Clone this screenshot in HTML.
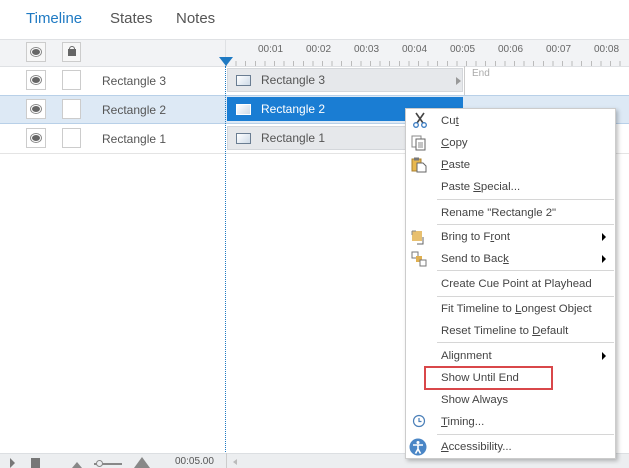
<!DOCTYPE html>
<html><head><style>
*{margin:0;padding:0;box-sizing:border-box}
body{width:629px;height:468px;overflow:hidden;background:#fff;font-family:"Liberation Sans",sans-serif;font-size:12px;color:#444;position:relative}
.a{position:absolute}
.tab{position:absolute;top:10px;font-size:15px;color:#555}
.eye{position:absolute;left:26px;width:20px;height:20px;border:1px solid #ccc;background:#fff}
.eye:after{content:"";position:absolute;left:5px;top:6px;width:8px;height:6px;border-radius:50%;background:#666;box-shadow:0 0 0 1px #fff, 0 0 0 2px #888}
.chk{position:absolute;left:62px;width:19px;height:20px;border:1px solid #ccc;background:#fff}
.nm{position:absolute;left:102px;font-size:12px;color:#555}
.bar{position:absolute;left:227px;width:236px;height:24px;background:#e6e8eb;border:1px solid #d4d7db}
.bar .ic{position:absolute;left:8px;top:6px;width:15px;height:11px;border:1px solid #6a7d92;background:linear-gradient(135deg,#fff,#cfdbe8)}
.bar span{position:absolute;left:33px;top:4px;font-size:12px;color:#555}
.tk{position:absolute;font-size:10px;color:#666;top:44px}
.mi{position:absolute;left:441px;font-size:11.4px;color:#444}
.sep{position:absolute;left:437px;width:177px;height:1px;background:#d6d6d6}
.arr{position:absolute;left:602px;width:0;height:0;border-left:4px solid #000;border-top:4px solid transparent;border-bottom:4px solid transparent}
u{text-decoration:underline}
</style></head><body>
<div class="tab" style="left:26px;color:#1f7ac3">Timeline</div>
<div class="tab" style="left:110px">States</div>
<div class="tab" style="left:176px">Notes</div>
<div class="a" style="left:0;top:39px;width:629px;height:28px;background:#f2f3f5;border-top:1px solid #dfe1e4;border-bottom:1px solid #dfe1e4"></div>
<div class="eye" style="top:42px;background:#f7f7f7"></div>
<div class="chk" style="top:42px;background:#f7f7f7"><div class="a" style="left:5px;top:6px;width:8px;height:7px;background:#666"></div><div class="a" style="left:6px;top:3px;width:6px;height:5px;border:1.5px solid #666;border-bottom:none;border-radius:3px 3px 0 0"></div></div>
<div class="a" style="left:225px;top:39px;width:1px;height:28px;background:#dfe1e4"></div>
<div class="tk" style="left:258px">00:01</div><div class="tk" style="left:306px">00:02</div><div class="tk" style="left:354px">00:03</div><div class="tk" style="left:402px">00:04</div><div class="tk" style="left:450px">00:05</div><div class="tk" style="left:498px">00:06</div><div class="tk" style="left:546px">00:07</div><div class="tk" style="left:594px">00:08</div>
<div class="a" style="left:226px;top:61px;width:403px;height:5px;background:repeating-linear-gradient(90deg,#bbb 0 1px,transparent 1px 9.6px)"></div>
<div class="a" style="left:219px;top:57px;border-left:7px solid transparent;border-right:7px solid transparent;border-top:9px solid #1f7ac3"></div>
<div class="a" style="left:0;top:95px;width:629px;height:29px;background:#dde9f5;border-top:1px solid #b8d0e8;border-bottom:1px solid #b8d0e8"></div>
<div class="a" style="left:0;top:153px;width:629px;height:1px;background:#e4e4e4"></div>
<div class="eye" style="top:70px"></div><div class="chk" style="top:70px"></div><div class="nm" style="top:74px">Rectangle 3</div>
<div class="eye" style="top:99px"></div><div class="chk" style="top:99px"></div><div class="nm" style="top:103px">Rectangle 2</div>
<div class="eye" style="top:128px"></div><div class="chk" style="top:128px"></div><div class="nm" style="top:132px">Rectangle 1</div>
<div class="a" style="left:225px;top:66px;width:1px;height:388px;border-left:1px dotted #1f7ac3"></div>
<div class="bar" style="top:68px"><div class="ic"></div><span>Rectangle 3</span><div class="a" style="left:228px;top:8px;border-left:5px solid #999;border-top:4px solid transparent;border-bottom:4px solid transparent"></div></div>
<div class="a" style="left:464px;top:66px;width:1px;height:29px;background:#ccc"></div>
<div class="a" style="left:472px;top:68px;font-size:10px;color:#aaa">End</div>
<div class="bar" style="top:97px;background:#1a7dd3;border-color:#1a7dd3"><div class="ic" style="border-color:#fff"></div><span style="color:#fff">Rectangle 2</span></div>
<div class="bar" style="top:126px"><div class="ic"></div><span>Rectangle 1</span></div>
<div class="a" style="left:0;top:453px;width:629px;height:15px;background:#eceef0;border-top:1px solid #dcdfe2"></div>
<div class="a" style="left:10px;top:458px;border-left:5px solid #777;border-top:5px solid transparent;border-bottom:5px solid transparent"></div>
<div class="a" style="left:31px;top:458px;width:9px;height:10px;background:#777"></div>
<div class="a" style="left:72px;top:462px;border-left:5px solid transparent;border-right:5px solid transparent;border-bottom:6px solid #888"></div>
<div class="a" style="left:94px;top:463px;width:28px;height:2px;background:#888"></div>
<div class="a" style="left:96px;top:460px;width:7px;height:7px;border:1.5px solid #888;border-radius:50%;background:#eceef0"></div>
<div class="a" style="left:134px;top:457px;border-left:8px solid transparent;border-right:8px solid transparent;border-bottom:11px solid #888"></div>
<div class="a" style="left:175px;top:456px;font-size:10px;color:#555">00:05.00</div>
<div class="a" style="left:226px;top:453px;width:1px;height:15px;background:#ccc"></div>
<div class="a" style="left:233px;top:459px;border-right:4px solid #bbb;border-top:3px solid transparent;border-bottom:3px solid transparent"></div>
<div class="a" style="left:405px;top:108px;width:211px;height:351px;background:#fff;border:1px solid #ccc;box-shadow:2px 2px 4px rgba(0,0,0,.25)"></div>
<svg class="a" style="left:412px;top:112px" width="16" height="16" viewBox="0 0 16 16"><path d="M4 1L11 11M12 1L5 11" stroke="#444" stroke-width="1.6" fill="none"/><circle cx="4" cy="13" r="2.3" stroke="#3a7cc2" fill="none" stroke-width="1.3"/><circle cx="12" cy="13" r="2.3" stroke="#3a7cc2" fill="none" stroke-width="1.3"/></svg>
<svg class="a" style="left:411px;top:135px" width="16" height="16"><rect x="1" y="1" width="9" height="11" fill="#fff" stroke="#888"/><rect x="5" y="4" width="9" height="11" fill="#fff" stroke="#666"/><path d="M7 8h5M7 10h5M7 12h5" stroke="#888"/></svg>
<svg class="a" style="left:411px;top:157px" width="16" height="16"><rect x="1" y="2" width="9" height="12" fill="#e8b84f" stroke="#a88030"/><rect x="3" y="0.5" width="5" height="3" fill="#777"/><path d="M6 6h6l3 3v6H6z" fill="#fff" stroke="#666"/></svg>
<svg class="a" style="left:411px;top:230px" width="16" height="16"><rect x="1" y="1" width="10" height="10" fill="#e8c070"/><path d="M12 7v7H6" stroke="#666" fill="none"/><path d="M1 1h4M1 1v4" stroke="#888"/></svg>
<svg class="a" style="left:411px;top:251px" width="16" height="16"><rect x="1" y="1" width="6" height="6" fill="#fff" stroke="#777"/><rect x="5" y="5" width="6" height="6" fill="#e0b050"/><rect x="9" y="9" width="6" height="6" fill="#fff" stroke="#777"/></svg>
<svg class="a" style="left:412px;top:414px" width="14" height="14"><circle cx="7" cy="7" r="5.5" fill="none" stroke="#4a7fb8" stroke-width="1.2"/><path d="M7 4v3.5h2.5" stroke="#4a7fb8" fill="none" stroke-width="1.2"/></svg>
<svg class="a" style="left:409px;top:438px" width="18" height="18"><circle cx="9" cy="9" r="8.5" fill="#4a86c6"/><circle cx="9" cy="4.5" r="1.5" fill="#fff"/><path d="M4 7h10M9 7v4l-2.5 4.5M9 11l2.5 4.5" stroke="#fff" stroke-width="1.6" fill="none"/></svg>
<div class="mi" style="top:115px">Cu<u>t</u></div>
<div class="mi" style="top:137px"><u>C</u>opy</div>
<div class="mi" style="top:159px"><u>P</u>aste</div>
<div class="mi" style="top:181px">Paste <u>S</u>pecial...</div>
<div class="sep" style="top:199px"></div>
<div class="mi" style="top:207px">Rename "Rectangle 2"</div>
<div class="sep" style="top:224px"></div>
<div class="mi" style="top:231px">Bring to F<u>r</u>ont</div><div class="arr" style="top:233px"></div>
<div class="mi" style="top:253px">Send to Bac<u>k</u></div><div class="arr" style="top:255px"></div>
<div class="sep" style="top:270px"></div>
<div class="mi" style="top:278px">Create Cue Point at Playhead</div>
<div class="sep" style="top:296px"></div>
<div class="mi" style="top:303px">Fit Timeline to <u>L</u>ongest Object</div>
<div class="mi" style="top:325px">Reset Timeline to <u>D</u>efault</div>
<div class="sep" style="top:342px"></div>
<div class="mi" style="top:350px">Alignment</div><div class="arr" style="top:352px"></div>
<div class="a" style="left:424px;top:366px;width:129px;height:24px;border:2px solid #d9474a"></div>
<div class="mi" style="top:372px">Show Until End</div>
<div class="mi" style="top:394px">Show Always</div>
<div class="mi" style="top:416px"><u>T</u>iming...</div>
<div class="sep" style="top:434px"></div>
<div class="mi" style="top:441px"><u>A</u>ccessibility...</div>
</body></html>
